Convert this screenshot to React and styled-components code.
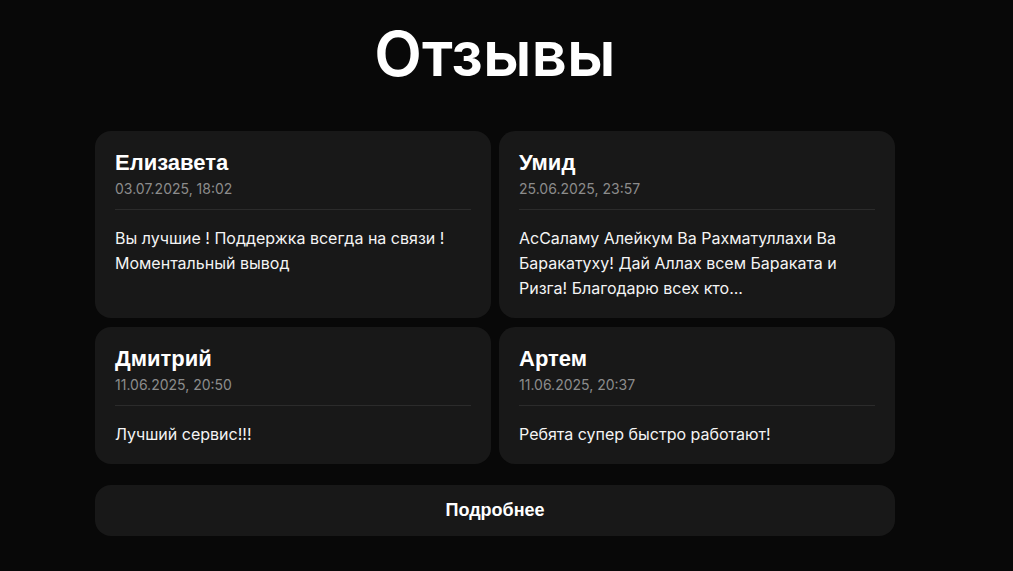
import React from 'react';
import styled, { createGlobalStyle } from 'styled-components';

const GlobalStyle = createGlobalStyle`
  html, body {
    margin: 0;
    padding: 0;
    background: #080808;
    color: #fff;
    font-family: Inter, "Noto Sans", sans-serif;
  }
`;

const Section = styled.section`
  width: 800px;
  margin-left: 95px;
  padding: 18px 0 34px;
`;

const Title = styled.h1`
  margin: 0 0 41px;
  text-align: center;
  font-size: 62px;
  line-height: 72px;
  font-weight: 600;
`;

const Grid = styled.div`
  display: grid;
  grid-template-columns: 1fr 1fr;
  gap: 9px 8px;
`;

const Card = styled.article`
  background: #181818;
  border-radius: 16px;
  padding: 19px 20px 17px;
`;

const Name = styled.div`
  font-family: "Liberation Sans", Arial, sans-serif;
  font-size: 22px;
  line-height: 26px;
  font-weight: 700;
`;

const Date = styled.div`
  margin-top: 3px;
  font-size: 14px;
  line-height: 20px;
  color: #8c8c8c;
`;

const Divider = styled.hr`
  border: 0;
  height: 1px;
  background: #2b2b2b;
  margin: 10px 0 16px;
`;

const Text = styled.p`
  margin: 0;
  font-size: 16px;
  line-height: 25px;
  color: #f4f4f4;
`;

const MoreButton = styled.button`
  display: block;
  width: 100%;
  margin-top: 21px;
  height: 51px;
  border: 0;
  border-radius: 16px;
  background: #181818;
  color: #fff;
  font-family: "Liberation Sans", Arial, sans-serif;
  font-size: 18px;
  font-weight: 700;
  cursor: pointer;
`;

const reviews = [
  { name: 'Елизавета', date: '03.07.2025, 18:02', text: 'Вы лучшие ! Поддержка всегда на связи ! Моментальный вывод' },
  { name: 'Умид', date: '25.06.2025, 23:57', text: 'АсСаламу Алейкум Ва Рахматуллахи Ва Баракатуху! Дай Аллах всем Бараката и Ризга! Благодарю всех кто...' },
  { name: 'Дмитрий', date: '11.06.2025, 20:50', text: 'Лучший сервис!!!' },
  { name: 'Артем', date: '11.06.2025, 20:37', text: 'Ребята супер быстро работают!' },
];

const App = () => {
  return (
    <>
      <GlobalStyle />
      <Section>
        <Title>Отзывы</Title>
        <Grid>
          {reviews.map((r) => (
            <Card key={r.name}>
              <Name>{r.name}</Name>
              <Date>{r.date}</Date>
              <Divider />
              <Text>{r.text}</Text>
            </Card>
          ))}
        </Grid>
        <MoreButton>Подробнее</MoreButton>
      </Section>
    </>
  );
};

export default App;
